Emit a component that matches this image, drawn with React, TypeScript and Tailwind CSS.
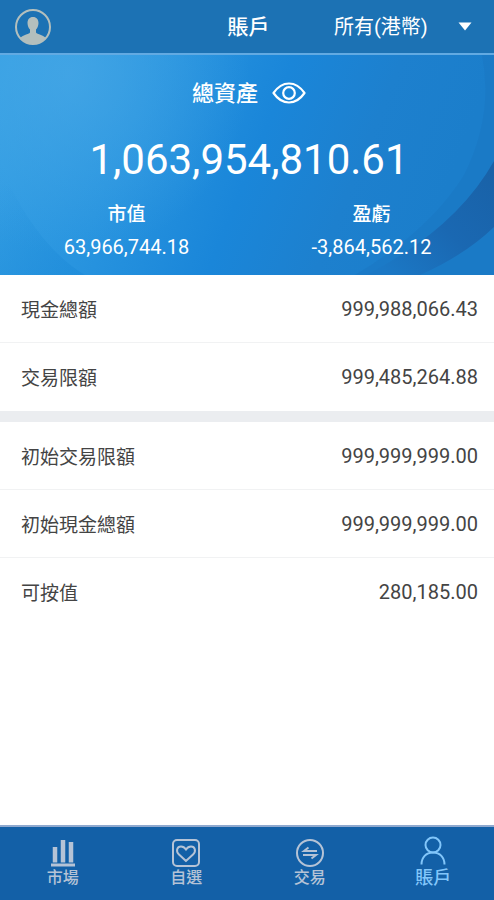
import { useState } from "react";
import type { ReactNode } from "react";

const CURRENCIES = ["所有(港幣)", "港幣", "人民幣", "美元"];

const LIMIT_ROWS = [
  { label: "現金總額", value: "999,988,066.43" },
  { label: "交易限額", value: "999,485,264.88" },
];

const INITIAL_ROWS = [
  { label: "初始交易限額", value: "999,999,999.00" },
  { label: "初始現金總額", value: "999,999,999.00" },
  { label: "可按值", value: "280,185.00" },
];

export default function App() {
  const [currency, setCurrency] = useState(CURRENCIES[0]);
  const [hidden, setHidden] = useState(false);
  const [tab, setTab] = useState("account");
  const mask = (value: string) => (hidden ? "******" : value);

  return (
    <div
      lang="zh-Hant"
      className="flex min-h-screen flex-col bg-white font-[Roboto,'Noto_Sans_CJK_TC',sans-serif] text-[#444]"
    >
      <header className="grid h-[55px] grid-cols-[1fr_auto_1fr] items-center border-b-2 border-[#62aae2] bg-[#1c72b4] pl-[15px] pr-3 text-white">
        <button type="button" aria-label="個人資料" className="justify-self-start">
          <AvatarIcon />
        </button>
        <h1 className="text-[21px] font-medium leading-8">賬戶</h1>
        <div className="relative w-[148px] justify-self-end">
          <select
            aria-label="幣種"
            value={currency}
            onChange={(event) => setCurrency(event.target.value)}
            className="h-8 w-full appearance-none bg-transparent text-xl leading-8 outline-none"
          >
            {CURRENCIES.map((item) => (
              <option key={item} value={item} className="text-black">
                {item}
              </option>
            ))}
          </select>
          <svg
            viewBox="0 0 14 9"
            className="pointer-events-none absolute right-2.5 top-[11px] h-[9px] w-3.5"
            fill="currentColor"
          >
            <path d="M0.5 0.5h13L7 8.5z" />
          </svg>
        </div>
      </header>

      <section className="relative h-[220px] overflow-hidden text-white">
        <HeroBackdrop />
        <div className="relative flex flex-col items-center pl-1 pt-[21px]">
          <div className="flex items-center gap-3.5">
            <h2 className="pt-0.5 text-[22px] font-medium leading-8">總資產</h2>
            <button
              type="button"
              aria-label="顯示或隱藏金額"
              aria-pressed={hidden}
              onClick={() => setHidden(!hidden)}
            >
              <EyeIcon />
            </button>
          </div>
          <p className="mt-[22px] text-[42px] leading-[56px]">{mask("1,063,954,810.61")}</p>
          <dl className="mt-[11px] grid w-full grid-cols-2 text-center leading-8">
            <div>
              <dt className="text-[19px] font-medium leading-8">市值</dt>
              <dd className="text-xl leading-8">{mask("63,966,744.18")}</dd>
            </div>
            <div>
              <dt className="text-[19px] font-medium leading-8">盈虧</dt>
              <dd className="text-xl leading-8">{mask("-3,864,562.12")}</dd>
            </div>
          </dl>
        </div>
      </section>

      <main className="flex-1">
        <RowList rows={LIMIT_ROWS} />
        <div className="h-[11px] bg-[#ebedf0]" />
        <RowList rows={INITIAL_ROWS} />
      </main>

      <nav className="grid h-[75px] grid-cols-4 border-t-2 border-[#8fa9cf] bg-[#1360a7]">
        <Tab label="市場" active={tab === "market"} onClick={() => setTab("market")}>
          <path d="M3 26h24" strokeWidth="3" />
          <path d="M7 23.5V8M15 23.5V1M23 23.5V3" strokeWidth="4.5" />
        </Tab>
        <Tab label="自選" active={tab === "watchlist"} onClick={() => setTab("watchlist")}>
          <rect x="2" y="1" width="26" height="26" rx="4" strokeWidth="2" />
          <path
            d="M15 22 8 15.5C4.5 12 6 7.5 10 7.5c2.5 0 4 1.5 5 3 1-1.5 2.5-3 5-3 4 0 5.5 4.5 2 8z"
            strokeWidth="2"
          />
        </Tab>
        <Tab label="交易" active={tab === "trade"} onClick={() => setTab("trade")}>
          <circle cx="15" cy="14" r="13" strokeWidth="2" />
          <path d="M22 12H9l4.5-3.5M8 16h13l-4.5 3.5" strokeWidth="2" />
        </Tab>
        <Tab label="賬戶" active={tab === "account"} onClick={() => setTab("account")}>
          <circle cx="15" cy="6" r="7.5" strokeWidth="2" />
          <path d="M3.5 25.5c0-7 4.5-12 11.5-12s11.5 5 11.5 12" strokeWidth="2" />
        </Tab>
      </nav>
    </div>
  );
}

function RowList({ rows }: { rows: { label: string; value: string }[] }) {
  return (
    <dl className="divide-y divide-[#f1f2f3]">
      {rows.map((row) => (
        <div key={row.label} className="flex h-[68px] items-center justify-between pl-[21px] pr-4">
          <dt className="pt-1 text-[19px] leading-8">{row.label}</dt>
          <dd className="text-xl leading-8">{row.value}</dd>
        </div>
      ))}
    </dl>
  );
}

type TabProps = {
  label: string;
  active: boolean;
  onClick: () => void;
  children: ReactNode;
};

function Tab({ label, active, onClick, children }: TabProps) {
  return (
    <button
      type="button"
      aria-current={active ? "page" : undefined}
      onClick={onClick}
      className={`flex flex-col items-center pl-0.5 pt-3 font-medium ${
        active ? "text-lg leading-[22px] text-[#82c6fa]" : "text-base leading-[22px] text-[#b5c3d6]"
      }`}
    >
      <svg
        viewBox="0 0 30 28"
        className="h-7 w-[30px] shrink-0 overflow-visible"
        fill="none"
        stroke="currentColor"
      >
        {children}
      </svg>
      {label}
    </button>
  );
}

function AvatarIcon() {
  return (
    <svg viewBox="0 0 36 36" className="h-9 w-9 text-[#b3bfbd]" fill="none">
      <circle cx="18" cy="18" r="17" stroke="currentColor" strokeWidth="2" />
      <path
        d="M18 8c-3.6 0-5.5 2.6-5.5 6 0 3 1.3 5.2 2.5 6.6v2.6c0 1.8-7 2.6-10 5.8A17 17 0 0 0 31 29c-3-3.2-10-4-10-5.8v-2.6c1.2-1.4 2.5-3.6 2.5-6.6 0-3.4-1.9-6-5.5-6z"
        fill="currentColor"
      />
    </svg>
  );
}

function EyeIcon() {
  return (
    <svg
      viewBox="0 0 34 22"
      className="h-[22px] w-[34px]"
      fill="none"
      stroke="currentColor"
      strokeWidth="2.2"
      strokeLinejoin="round"
    >
      <path d="M1.5 11C6 4.5 11 1.5 17 1.5S28 4.5 32.5 11C28 17.5 23 20.5 17 20.5S6 17.5 1.5 11z" />
      <circle cx="17" cy="11" r="5.8" />
    </svg>
  );
}

function HeroBackdrop() {
  return (
    <svg
      viewBox="0 0 494 220"
      preserveAspectRatio="none"
      className="absolute inset-0 h-full w-full"
      aria-hidden="true"
    >
      <defs>
        <linearGradient id="base" gradientUnits="userSpaceOnUse" x1="0" y1="30" x2="420" y2="200">
          <stop offset="0" stopColor="#35a0e4" />
          <stop offset="0.3" stopColor="#2894df" />
          <stop offset="0.58" stopColor="#1a86d9" />
          <stop offset="0.8" stopColor="#1d80ce" />
          <stop offset="1" stopColor="#1b7ecb" />
        </linearGradient>
        <radialGradient id="glow" gradientUnits="userSpaceOnUse" cx="70" cy="20" r="180">
          <stop offset="0" stopColor="#48a8e6" stopOpacity="0.7" />
          <stop offset="1" stopColor="#48a8e6" stopOpacity="0" />
        </radialGradient>
        <linearGradient id="swoosh" gradientUnits="userSpaceOnUse" x1="494" y1="120" x2="390" y2="220">
          <stop offset="0" stopColor="#1962a8" />
          <stop offset="0.5" stopColor="#1a68b2" />
          <stop offset="1" stopColor="#1b78c5" />
        </linearGradient>
        <linearGradient id="low" gradientUnits="userSpaceOnUse" x1="0" y1="130" x2="60" y2="220">
          <stop offset="0" stopColor="#1583d3" stopOpacity="0" />
          <stop offset="1" stopColor="#1583d3" stopOpacity="0.3" />
        </linearGradient>
      </defs>
      <rect width="494" height="220" fill="url(#base)" />
      <rect width="494" height="220" fill="url(#glow)" />
      <path d="M0 110Q35 190 85 220H0z" fill="url(#low)" />
      <path d="M482 0Q494 60 464 120 430 175 355 220H494V0z" fill="#1a76c0" fillOpacity="0.45" />
      <path d="M494 106Q456 174 366 220H420Q465 200 494 172z" fill="url(#swoosh)" />
    </svg>
  );
}
